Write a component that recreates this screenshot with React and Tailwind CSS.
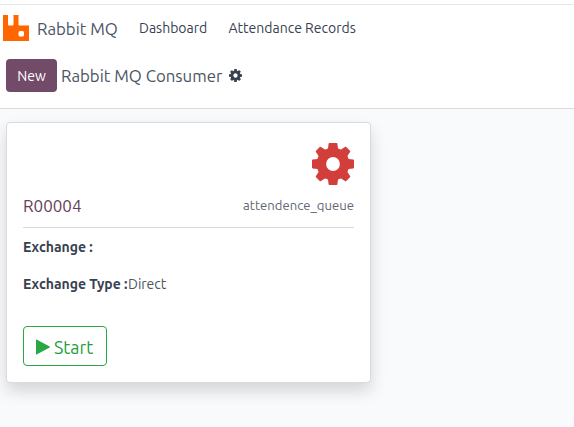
const COG =
  'M1024 768q0-106-75-181t-181-75-181 75-75 181 75 181 181 75 181-75 75-181zm512-109v222q0 12-8 23t-20 13l-185 28q-19 54-39 91 35 50 107 138 10 12 10 25t-9 23q-27 37-99 108t-94 71q-12 0-26-9l-138-108q-44 23-91 38-16 136-29 186-7 28-36 28h-222q-14 0-24.500-8.500t-11.500-21.500l-28-184q-49-16-90-37l-141 107q-10 9-25 9-14 0-25-11-126-114-165-168-7-10-7-23 0-12 8-23 15-21 51-66.500t54-70.500q-27-50-41-99l-183-27q-13-2-21-12.500t-8-23.500v-222q0-12 8-23t19-13l186-28q14-46 39-92-40-57-107-138-10-12-10-24 0-10 9-23 26-36 98.500-107.500t94.500-71.500q13 0 26 10l138 107q44-23 91-38 16-136 29-186 7-28 36-28h222q14 0 24.500 8.500t11.500 21.500l28 184q49 16 90 37l142-107q9-9 24-9 13 0 25 10 129 119 165 170 7 8 7 22 0 12-8 23-15 21-51 66.500t-54 70.500q26 50 41 98l183 28q13 2 21 12.500t8 23.500z';

function Cog({ className }) {
  return (
    <svg viewBox="0 0 1536 1536" fill="currentColor" className={className}>
      <path d={COG} />
    </svg>
  );
}

function Gear({ className }) {
  return (
    <svg viewBox="-21 -21 42 42" className={className}>
      <circle r="11.600" fill="none" stroke="currentColor" strokeWidth="9.400" />
      {[0, 90, 180, 270].map((angle) => (
        <g key={angle} transform={`rotate(${angle})`} fill="currentColor">
          <path d="M-6.500 -14L-5 -15.500L-4.400 -20.300Q-4.300 -21 -3.600 -21H3.600Q4.300 -21 4.400 -20.300L5 -15.500L6.500 -14Z" />
          <path transform="rotate(45)" d="M-6 -14L-4.700 -15.500L-3.600 -20.500Q-3.400 -21.400 -2.600 -21.400H2.600Q3.400 -21.400 3.600 -20.500L4.700 -15.500L6 -14Z" />
        </g>
      ))}
    </svg>
  );
}

function Logo() {
  return (
    <svg viewBox="0 0 26 26" className="h-[26px] w-[26px] shrink-0">
      <path
        fill="#ff6600"
        fillRule="evenodd"
        d="M0 0H5V9.500Q5 10.500 6 10.500H9.500Q10.500 10.500 10.500 9.500V0H15.500V9.500Q15.500 10.500 16.500 10.500H26V26H0ZM17 16Q15.500 16 15.500 17.500V20Q15.500 21.500 17 21.500H19.500Q21 21.500 21 20V17.500Q21 16 19.500 16Z"
      />
    </svg>
  );
}

export default function App() {
  return (
    <div className="flex h-[427px] w-[574px] flex-col overflow-hidden bg-[#f9fafb] font-['Ubuntu','Noto_Sans',sans-serif] text-[#374151]">
      <header className="h-[109px] shrink-0 border-b border-[#d8dadd] bg-white pt-1">
        <nav className="flex h-[46px] items-center border-t border-[#e4e6e9] pl-[3px]">
          <Logo />
          <span className="ml-2 w-[81px] whitespace-nowrap pt-0.5 text-[16.8px] text-[#4b5563]">Rabbit MQ</span>
          <span className="ml-[21px] w-[69px] whitespace-nowrap pt-0.5 text-[14px]">Dashboard</span>
          <span className="ml-[20.5px] whitespace-nowrap pt-0.5 text-[14px]">Attendance Records</span>
        </nav>
        <div className="mt-[9px] flex h-[33px] items-center pl-[6px]">
          <button className="h-[33px] w-[51px] rounded-[4px] bg-[#714b67] pt-px text-[14px] text-white">New</button>
          <span className="ml-1 w-[162px] whitespace-nowrap text-[16.8px] text-[#4b5563]">Rabbit MQ Consumer</span>
          <Cog className="ml-[6px] h-[13px] w-[13px]" />
        </div>
      </header>
      <main className="pl-[6px] pt-[13px]">
        <article className="flex h-[261px] w-[365px] flex-col rounded-[4px] border border-[#d8dadd] bg-white px-4 pt-5 shadow-[0_8px_16px_rgba(0,0,0,0.15)]">
          <Gear className="h-[42px] w-[42px] self-end text-[#d23f3a]" />
          <div className="flex h-[43px] items-center justify-between border-b border-[#d8dadd]">
            <span className="text-[17px] text-[#65405b]">R00004</span>
            <span className="text-[13.125px] text-[#5f6673]">attendence_queue</span>
          </div>
          <p className="mt-[9px] h-[21px] text-[14px] leading-[21px]">
            <b className="font-semibold">Exchange :</b>
          </p>
          <p className="mt-4 flex h-[21px] text-[14px] leading-[21px]">
            <b className="w-[105px] whitespace-nowrap font-semibold">Exchange Type :</b>
            <span className="text-[#4b5563]">Direct</span>
          </p>
          <button className="mt-[31px] flex h-[40px] w-[84px] items-center rounded-[4px] border border-[#28a745] pl-3 pt-0.5 text-[17.800px] text-[#22a040]">
            <svg viewBox="0 0 14 16" fill="#28a745" className="mr-1 h-4 w-[14px] shrink-0">
              <path d="M0 .8Q0 .1.600.400L13.600 7.600Q14.200 8 13.600 8.400L.6 15.600Q0 15.900 0 15.200Z" />
            </svg>
            Start
          </button>
        </article>
      </main>
    </div>
  );
}
